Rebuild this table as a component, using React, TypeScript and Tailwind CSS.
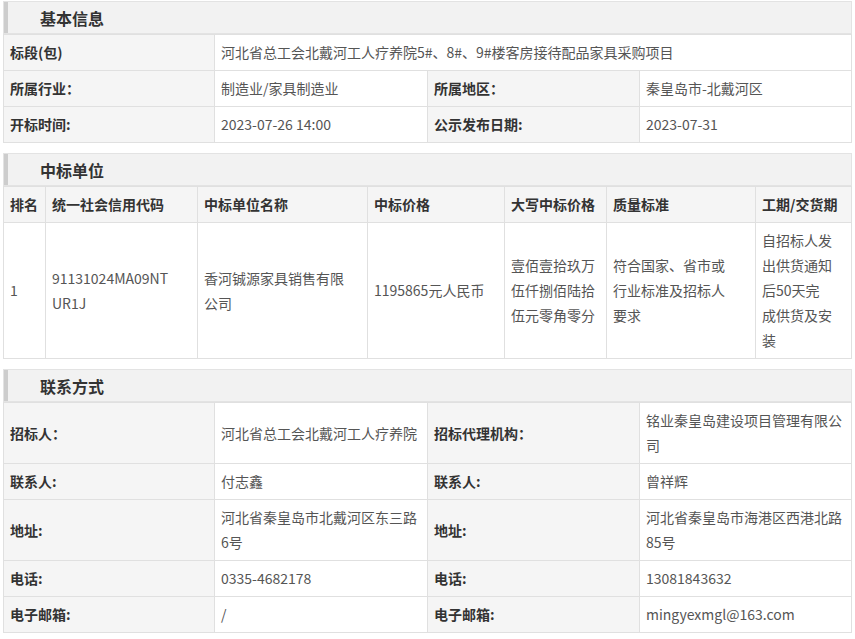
import React from "react";

const font = { fontFamily: '"Noto Sans CJK SC", "Noto Sans", sans-serif' };

function SectionHeader({ title }: { title: string }) {
  return (
    <div className="flex h-[33px] items-stretch border border-[#e3e3e3] bg-[#f2f2f2]">
      <div className="w-[4px] bg-[#cdcdcd]" />
      <div className="flex items-center pl-[32px] text-[16px] font-bold text-[#333]">{title}</div>
    </div>
  );
}

const th = "border border-[#e0e0e0] bg-[#f5f5f5] px-[6px] py-[5px] text-left align-middle font-bold text-[#333]";
const td = "border border-[#e0e0e0] bg-white px-[6px] py-[5px] text-left align-middle text-[#555]";

function Lines({ lines }: { lines: string[] }) {
  return (
    <>
      {lines.map((l, i) => (
        <span key={i} className="block">
          {l}
        </span>
      ))}
    </>
  );
}

function KVTable({ rows }: { rows: [string, string, string?, string?][] }) {
  return (
    <table className="w-full table-fixed border-collapse text-[14px] leading-[25px]">
      <colgroup>
        <col className="w-[211px]" />
        <col className="w-[213px]" />
        <col className="w-[212px]" />
        <col className="w-[212px]" />
      </colgroup>
      <tbody>
        {rows.map((r, i) => (
          <tr key={i}>
            <th className={th}>{r[0]}</th>
            {r[2] === undefined ? (
              <td className={td} colSpan={3}>
                {r[1]}
              </td>
            ) : (
              <>
                <td className={td}>{r[1]}</td>
                <th className={th}>{r[2]}</th>
                <td className={td}>{r[3]}</td>
              </>
            )}
          </tr>
        ))}
      </tbody>
    </table>
  );
}

export default function App() {
  const winnerCols = ["排名", "统一社会信用代码", "中标单位名称", "中标价格", "大写中标价格", "质量标准", "工期/交货期"];
  return (
    <div className="w-[855px] bg-white px-[3px] pb-[3px] pt-[1px]" style={font}>
      {/* 基本信息 */}
      <SectionHeader title="基本信息" />
      <KVTable
        rows={[
          ["标段(包)", "河北省总工会北戴河工人疗养院5#、8#、9#楼客房接待配品家具采购项目"],
          ["所属行业：", "制造业/家具制造业", "所属地区：", "秦皇岛市-北戴河区"],
          ["开标时间:", "2023-07-26 14:00", "公示发布日期:", "2023-07-31"],
        ]}
      />

      {/* 中标单位 */}
      <div className="mt-[10px]">
        <SectionHeader title="中标单位" />
        <table className="w-full table-fixed border-collapse text-[14px] leading-[25px]">
          <colgroup>
            <col className="w-[42px]" />
            <col className="w-[152px]" />
            <col className="w-[170px]" />
            <col className="w-[137px]" />
            <col className="w-[102px]" />
            <col className="w-[149px]" />
            <col className="w-[96px]" />
          </colgroup>
          <thead>
            <tr>
              {winnerCols.map((c) => (
                <th key={c} className={th}>
                  {c}
                </th>
              ))}
            </tr>
          </thead>
          <tbody>
            <tr>
              <td className={td}>1</td>
              <td className={td}>
                <Lines lines={["91131024MA09NT", "UR1J"]} />
              </td>
              <td className={td}>
                <Lines lines={["香河铖源家具销售有限", "公司"]} />
              </td>
              <td className={td}>1195865元人民币</td>
              <td className={td}>
                <Lines lines={["壹佰壹拾玖万", "伍仟捌佰陆拾", "伍元零角零分"]} />
              </td>
              <td className={td}>
                <Lines lines={["符合国家、省市或", "行业标准及招标人", "要求"]} />
              </td>
              <td className={td}>
                <Lines lines={["自招标人发", "出供货通知", "后50天完", "成供货及安", "装"]} />
              </td>
            </tr>
          </tbody>
        </table>
      </div>

      {/* 联系方式 */}
      <div className="mt-[10px]">
        <SectionHeader title="联系方式" />
        <table className="w-full table-fixed border-collapse text-[14px] leading-[25px]">
          <colgroup>
            <col className="w-[211px]" />
            <col className="w-[213px]" />
            <col className="w-[212px]" />
            <col className="w-[212px]" />
          </colgroup>
          <tbody>
            <tr>
              <th className={th}>招标人：</th>
              <td className={td}>河北省总工会北戴河工人疗养院</td>
              <th className={th}>招标代理机构：</th>
              <td className={td}>
                <Lines lines={["铭业秦皇岛建设项目管理有限公", "司"]} />
              </td>
            </tr>
            <tr>
              <th className={th}>联系人:</th>
              <td className={td}>付志鑫</td>
              <th className={th}>联系人:</th>
              <td className={td}>曾祥辉</td>
            </tr>
            <tr>
              <th className={th}>地址:</th>
              <td className={td}>
                <Lines lines={["河北省秦皇岛市北戴河区东三路", "6号"]} />
              </td>
              <th className={th}>地址:</th>
              <td className={td}>
                <Lines lines={["河北省秦皇岛市海港区西港北路", "85号"]} />
              </td>
            </tr>
            <tr>
              <th className={th}>电话:</th>
              <td className={td}>0335-4682178</td>
              <th className={th}>电话:</th>
              <td className={td}>13081843632</td>
            </tr>
            <tr>
              <th className={th}>电子邮箱:</th>
              <td className={td}>/</td>
              <th className={th}>电子邮箱:</th>
              <td className={td}>mingyexmgl@163.com</td>
            </tr>
          </tbody>
        </table>
      </div>
    </div>
  );
}
